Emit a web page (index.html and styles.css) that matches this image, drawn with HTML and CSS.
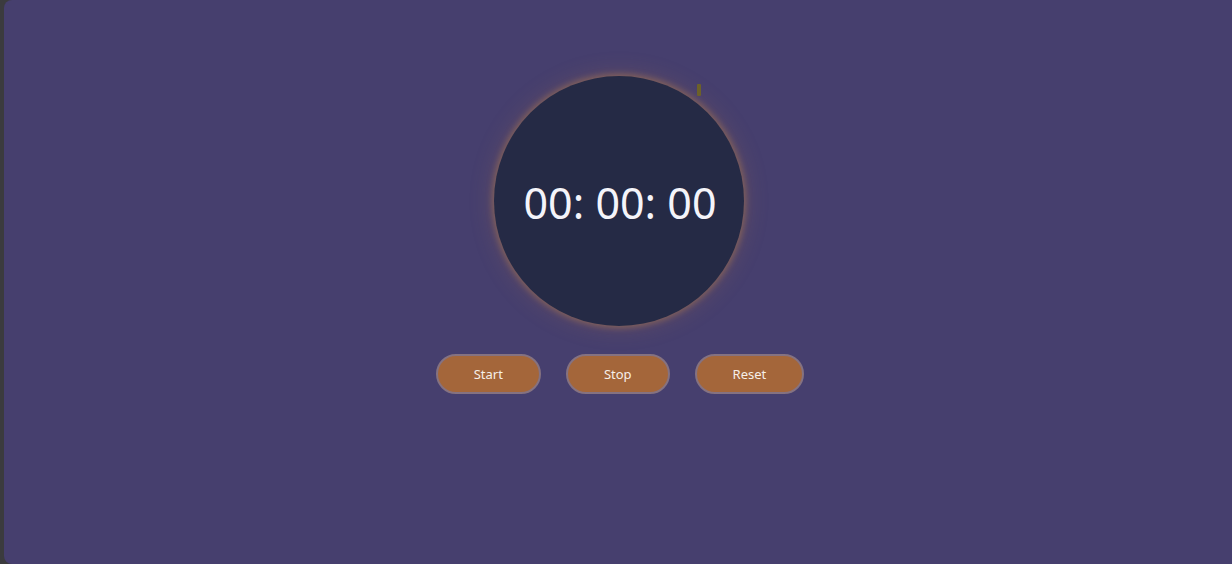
FILE: index.html
```html
<!DOCTYPE html>
<html>
<head>
<meta charset="utf-8">
<link rel="stylesheet" href="styles.css">
</head>
<body>
<div class="app">
  <div class="dial-wrap">
    <div class="dial">
      <span class="time">00: 00: 00</span>
    </div>
    <span class="tick"></span>
  </div>
  <div class="controls">
    <button class="btn">Start</button>
    <button class="btn">Stop</button>
    <button class="btn">Reset</button>
  </div>
</div>
</body>
</html>
```
FILE: styles.css
```css
html, body {
  margin: 0;
  height: 100%;
}
body {
  background: #3b3b3e;
  font-family: "Noto Sans", "Open Sans", sans-serif;
}
.app {
  margin-left: 4px;
  height: 564px;
  background: #463f6e;
  border-radius: 8px 0 0 8px;
  display: flex;
  flex-direction: column;
  align-items: center;
  padding-top: 76px;
  box-sizing: border-box;
}
.dial-wrap {
  position: relative;
  margin-left: 2px;
}
.dial {
  width: 250px;
  height: 250px;
  border-radius: 50%;
  background: #252a45;
  box-shadow: 0 0 6px 2px rgba(190, 130, 70, 0.45), 0 0 20px 5px rgba(160, 110, 80, 0.22);
  display: flex;
  align-items: center;
  justify-content: center;
}
.time {
  color: #f4f4fa;
  font-size: 43px;
  padding-top: 3px;
  padding-left: 2px;
}
.tick {
  position: absolute;
  left: 203px;
  top: 8px;
  width: 4px;
  height: 12px;
  background: #6d6128;
  border-radius: 1px;
}
.controls {
  display: flex;
  gap: 25px;
  margin-top: 28px;
  margin-left: 4px;
}
.btn {
  height: 40px;
  padding: 0 36px;
  border-radius: 20px;
  border: 2px solid #857281;
  background: #a4663a;
  color: #f6efe8;
  font-family: "Noto Sans", sans-serif;
  font-size: 13px;
}
```
